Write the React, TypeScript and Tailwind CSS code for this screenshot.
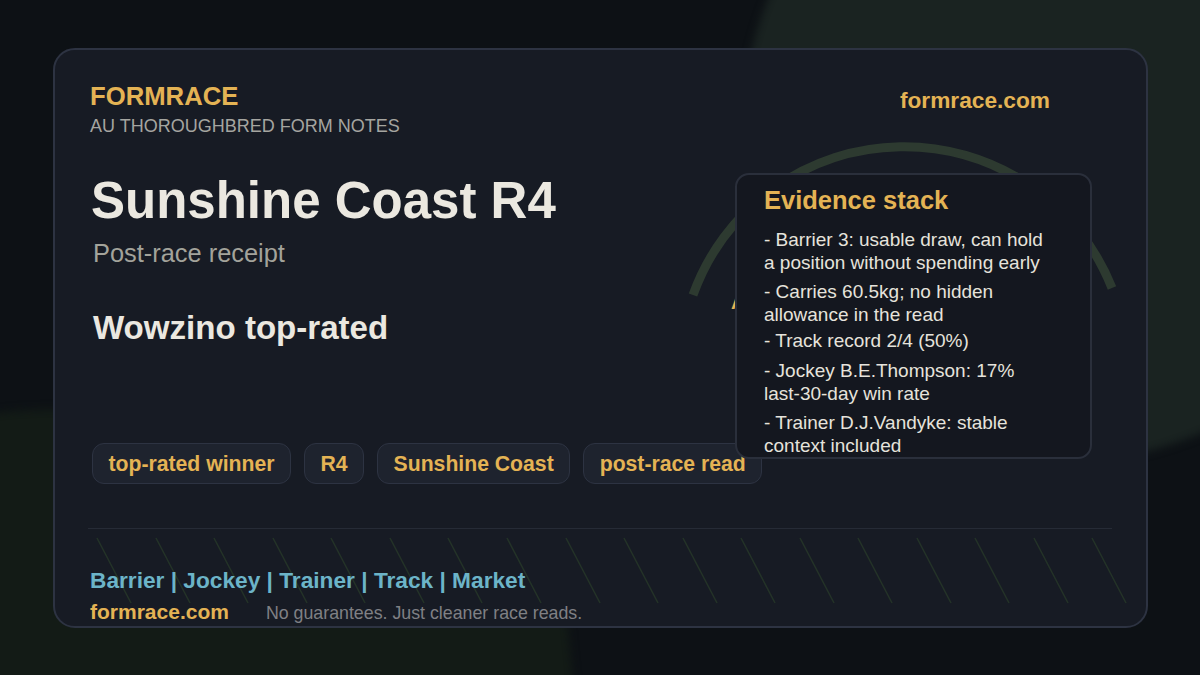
import React from 'react';

const evidence = [
  { gap: 'mt-0', lines: ['- Barrier 3: usable draw, can hold', 'a position without spending early'] },
  { gap: 'mt-[6px]', lines: ['- Carries 60.5kg; no hidden', 'allowance in the read'] },
  { gap: 'mt-[3px]', lines: ['- Track record 2/4 (50%)'] },
  { gap: 'mt-[7px]', lines: ['- Jockey B.E.Thompson: 17%', 'last-30-day win rate'] },
  { gap: 'mt-[6px]', lines: ['- Trainer D.J.Vandyke: stable', 'context included'] },
];

const tags = ['top-rated winner', 'R4', 'Sunshine Coast', 'post-race read'];

const hatchX = [97, 156, 214, 273, 331, 390, 448, 507, 566, 624, 683, 741, 800, 858, 917, 975, 1034, 1092];

const Backdrop = () => (
  <svg className="absolute inset-0" width="1200" height="675" viewBox="0 0 1200 675">
    <rect width="1200" height="675" fill="#0d1115" />
    <path className="blur-[4px]" d="M772 -10 C750 40 735 110 735 190 C735 350 900 462 1060 462 C1120 462 1170 448 1220 425 L1220 -10 Z" fill="#1a2321" />
    <path className="blur-[4px]" d="M-10 414 C160 390 420 470 566 610 L574 690 L-10 690 Z" fill="#131b16" />
  </svg>
);

const App = () => {
  return (
    <div className="relative w-[1200px] h-[675px] overflow-hidden bg-[#0d1115] font-['Liberation_Sans',Arial,sans-serif]">
      <Backdrop />
      <div className="absolute left-[53px] top-[48px] w-[1095px] h-[580px] rounded-[22px] border-2 border-[#2d3342] bg-[#171b24] overflow-hidden">
        {/* arc and hatching behind the content */}
        <svg className="absolute left-[-55px] top-[-50px]" width="1200" height="675" viewBox="0 0 1200 675" fill="none">
          <path d="M693 295 A224 224 0 0 1 1112 288" stroke="#2d3a30" strokeWidth="9" />
          {hatchX.map((x) => (
            <line key={x} x1={x} y1={538} x2={x + 34} y2={603} stroke="#243328" strokeWidth="1.5" />
          ))}
        </svg>

        <div className="relative flex flex-col h-full pl-[35px] pr-[34px]">
          <div className="flex justify-between pt-[31px]">
            <div className="flex flex-col">
              <span className="text-[25.7px] leading-[30px] font-bold text-[#e4b354]">FORMRACE</span>
              <span className="text-[18px] leading-[20px] mt-[5px] text-[#a5a5a0]">AU THOROUGHBRED FORM NOTES</span>
            </div>
            <span className="text-[22.7px] leading-[26px] font-bold text-[#e4b354] mr-[62px] mt-[6px]">formrace.com</span>
          </div>

          <h1 className="ml-[1px] mt-[35px] text-[51px] leading-[60px] font-bold text-[#ebe8e0]">Sunshine Coast R4</h1>
          <p className="ml-[3px] mt-[7px] text-[25.4px] leading-[30px] text-[#a3a39b]">Post-race receipt</p>
          <p className="ml-[3px] mt-[41px] text-[33.1px] leading-[38px] font-bold text-[#ebe8e0]">Wowzino top-rated</p>

          <div className="flex gap-[13px] mt-[96px] ml-[2px]">
            {tags.map((t) => (
              <span key={t} className="h-[41px] px-[15.5px] flex items-center rounded-[12px] border border-[#2d3342] bg-[#1e232e] text-[21.2px] font-bold text-[#e4b354]">
                {t}
              </span>
            ))}
          </div>

          <div className="mt-[44px] h-px bg-[#262b36] -ml-[2px]" />

          <div className="mt-[38px] text-[22.7px] leading-[26px] font-bold text-[#6cb4c8]">Barrier | Jockey | Trainer | Track | Market</div>
          <div className="mt-[6px] flex items-baseline gap-[37px]">
            <span className="text-[21px] leading-[25px] font-bold text-[#e4b354]">formrace.com</span>
            <span className="text-[17.8px] leading-[22px] text-[#7f8084]">No guarantees. Just cleaner race reads.</span>
          </div>
        </div>

        <span className="absolute left-[676px] top-[240px] text-[20px] leading-[24px] font-bold text-[#e4b354]">A</span>

        <div className="absolute left-[680px] top-[123px] w-[357px] h-[286px] rounded-[14px] border-2 border-[#2a2f3b] bg-[#14171f] pl-[27px] pt-[10px] overflow-hidden">
          <h2 className="text-[25.5px] leading-[30px] font-bold text-[#e4b354]">Evidence stack</h2>
          <div className="mt-[13px] text-[19px] leading-[23px] text-[#e6e3dc]">
            {evidence.map((item) => (
              <div key={item.lines[0]} className={item.gap}>
                {item.lines.map((l) => (
                  <div key={l}>{l}</div>
                ))}
              </div>
            ))}
          </div>
        </div>
      </div>
    </div>
  );
};

export default App;
